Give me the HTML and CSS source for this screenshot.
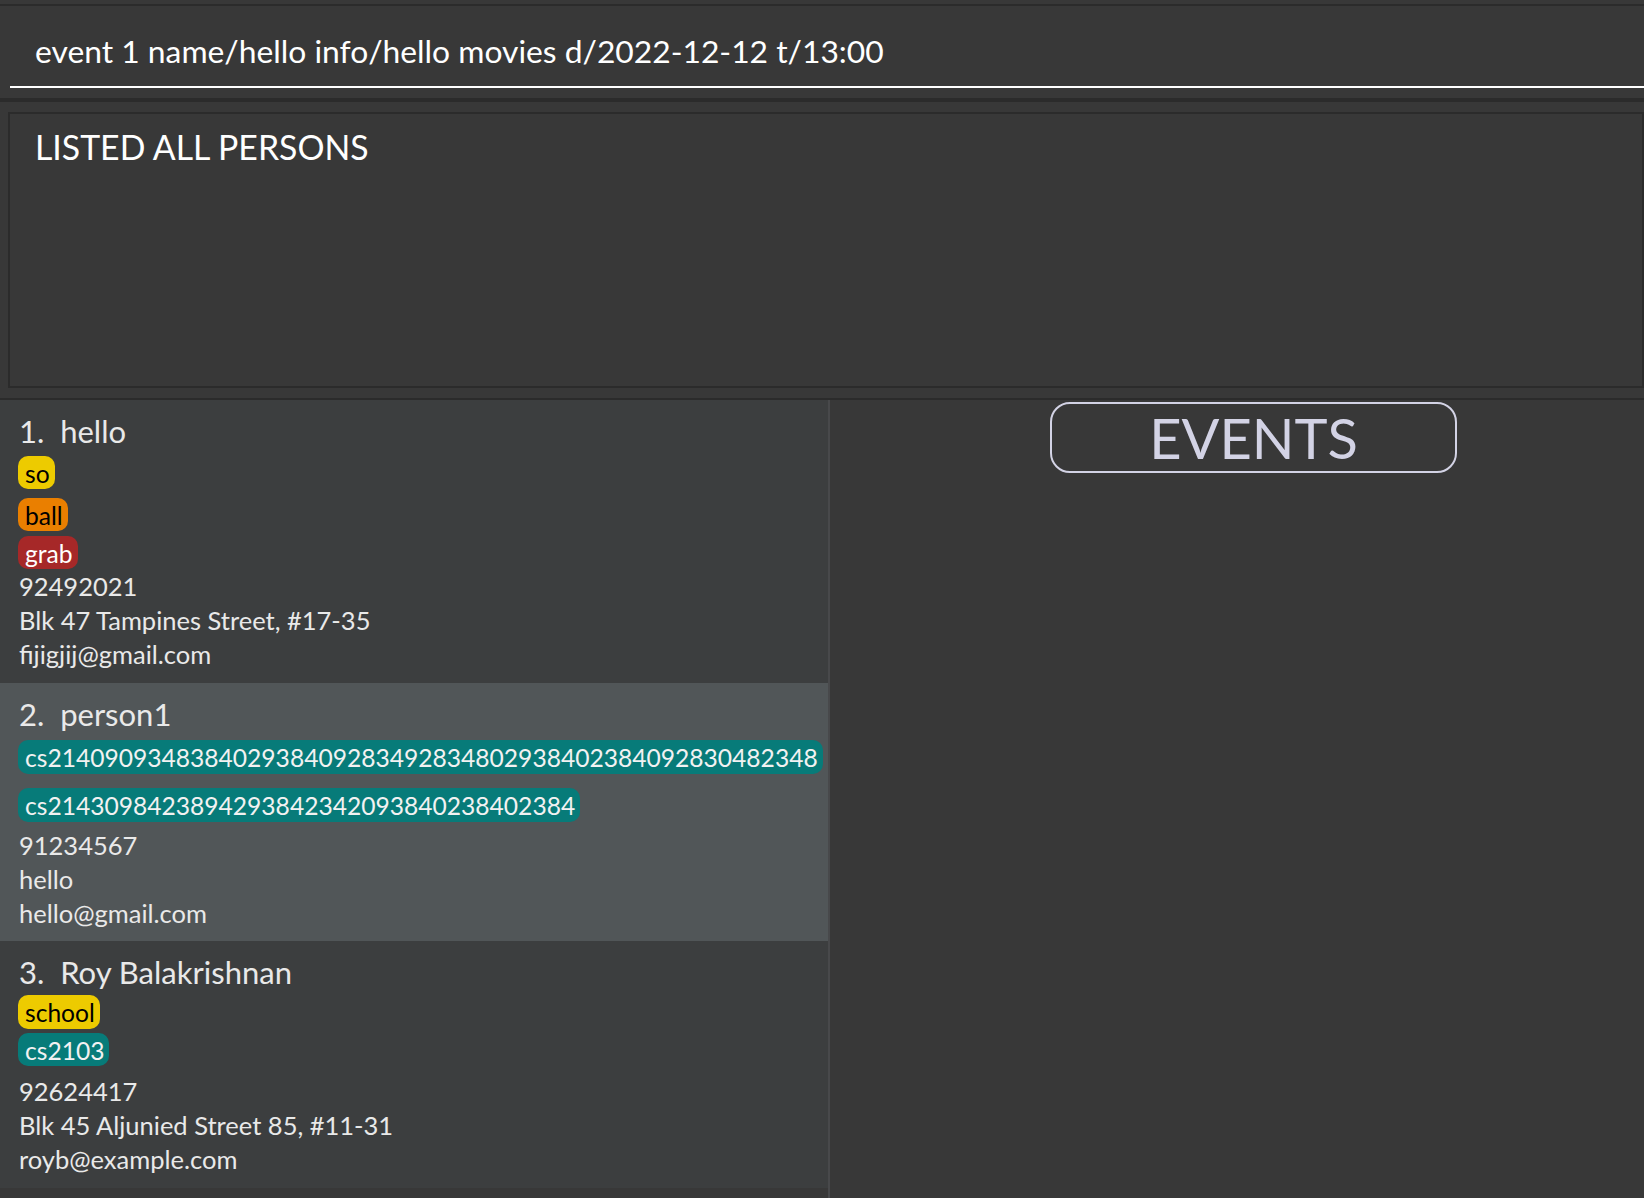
FILE: index.html
```html
<!DOCTYPE html>
<html lang="en">
<head>
<meta charset="utf-8">
<title>Address Book</title>
<link rel="stylesheet" href="styles.css">
</head>
<body>
<div class="app">
  <div class="menubar"></div>
  <div class="command-pane">
    <div class="command-field">event 1 name/hello info/hello movies d/2022-12-12 t/13:00</div>
  </div>
  <div class="result-pane">
    <div class="result-box">LISTED ALL PERSONS</div>
  </div>
  <div class="main">
    <div class="person-list">
      <div class="card even">
        <div class="name">1.&nbsp; hello</div>
        <div class="tag tag-yellow mt-5">so</div>
        <div class="tag tag-orange mt-9">ball</div>
        <div class="tag tag-red mt-5">grab</div>
        <div class="details mt-0">
          <div class="detail">92492021</div>
          <div class="detail">Blk 47 Tampines Street, #17-35</div>
          <div class="detail">fijigjij@gmail.com</div>
        </div>
      </div>
      <div class="card odd">
        <div class="name">2.&nbsp; person1</div>
        <div class="tag tag-teal tall mt-6">cs214090934838402938409283492834802938402384092830482348</div>
        <div class="tag tag-teal tall mt-14">cs2143098423894293842342093840238402384</div>
        <div class="details mt-6">
          <div class="detail">91234567</div>
          <div class="detail">hello</div>
          <div class="detail">hello@gmail.com</div>
        </div>
      </div>
      <div class="card even">
        <div class="name">3.&nbsp; Roy Balakrishnan</div>
        <div class="tag tag-yellow tall mt-3">school</div>
        <div class="tag tag-teal mt-4">cs2103</div>
        <div class="details mt-8">
          <div class="detail">92624417</div>
          <div class="detail">Blk 45 Aljunied Street 85, #11-31</div>
          <div class="detail">royb@example.com</div>
        </div>
      </div>
    </div>
    <div class="divider"></div>
    <div class="events-pane">
      <div class="events-title">EVENTS</div>
    </div>
  </div>
</div>
</body>
</html>
```
FILE: styles.css
```css
* { box-sizing: border-box; }
html, body { margin: 0; padding: 0; }
body {
  background: #383838;
  font-family: Lato, Roboto, "Liberation Sans", sans-serif;
  color: #ffffff;
  width: 1644px;
  height: 1198px;
  overflow: hidden;
}
.app { display: flex; flex-direction: column; height: 1198px; }

.menubar { height: 6px; border-bottom: 2px solid #2b2b2b; flex: none; }

.command-pane {
  flex: none;
  height: 96px;
  padding: 11px 0 10px 10px;
  border-bottom: 4px solid #2b2b2b;
}
.command-field {
  height: 71px;
  line-height: 69px;
  border-bottom: 2px solid #ffffff;
  padding-left: 25px;
  font-size: 31.8px;
  white-space: nowrap;
  color: #ffffff;
}

.result-pane {
  flex: none;
  height: 298px;
  padding: 10px 0 10px 8px;
  border-bottom: 2px solid #2b2b2b;
}
.result-box {
  height: 276px;
  border: 2px solid #2b2b2b;
  padding: 13px 25px;
  font-size: 33.8px;
  line-height: 40px;
  color: #ffffff;
}

.main { flex: 1; display: flex; min-height: 0; }
.person-list { width: 828px; flex: none; display: flex; flex-direction: column; }
.divider { width: 2px; flex: none; background: #48494b; }
.events-pane { flex: 1; padding: 2px 0 0 220px; }
.events-title {
  width: 407px;
  height: 71px;
  border: 2px solid #d3d3e5;
  border-radius: 20px;
  display: flex;
  align-items: center;
  justify-content: center;
  font-size: 56px;
  color: #d3d3e5;
}

.card { padding: 11px 0 11.5px 18px; color: #e9e9e9; }
.card.even { background: #3c3e3f; }
.card.odd { background: #515658; }

.name { font-size: 31px; line-height: 40px; padding-left: 1px; }

.tag {
  width: fit-content;
  height: 33px;
  padding: 2px 5px 0 7px;
  line-height: 31px;
  border-radius: 10px;
  font-size: 24.6px;
  white-space: nowrap;
}
.tag.tall { height: 34px; }
.tag-yellow { background: #edcb00; color: #000000; }
.tag-orange { background: #ea7f00; color: #000000; }
.tag-red { background: #a62828; color: #ffffff; }
.tag-teal { background: #077b79; color: #f2f2f2; }

.detail { font-size: 25.5px; line-height: 34px; padding-left: 1px; }

.mt-0 { margin-top: 0; }
.mt-3 { margin-top: 3px; }
.mt-4 { margin-top: 4px; }
.mt-5 { margin-top: 5px; }
.mt-6 { margin-top: 6px; }
.mt-8 { margin-top: 8px; }
.mt-9 { margin-top: 9px; }
.mt-14 { margin-top: 14px; }
```
